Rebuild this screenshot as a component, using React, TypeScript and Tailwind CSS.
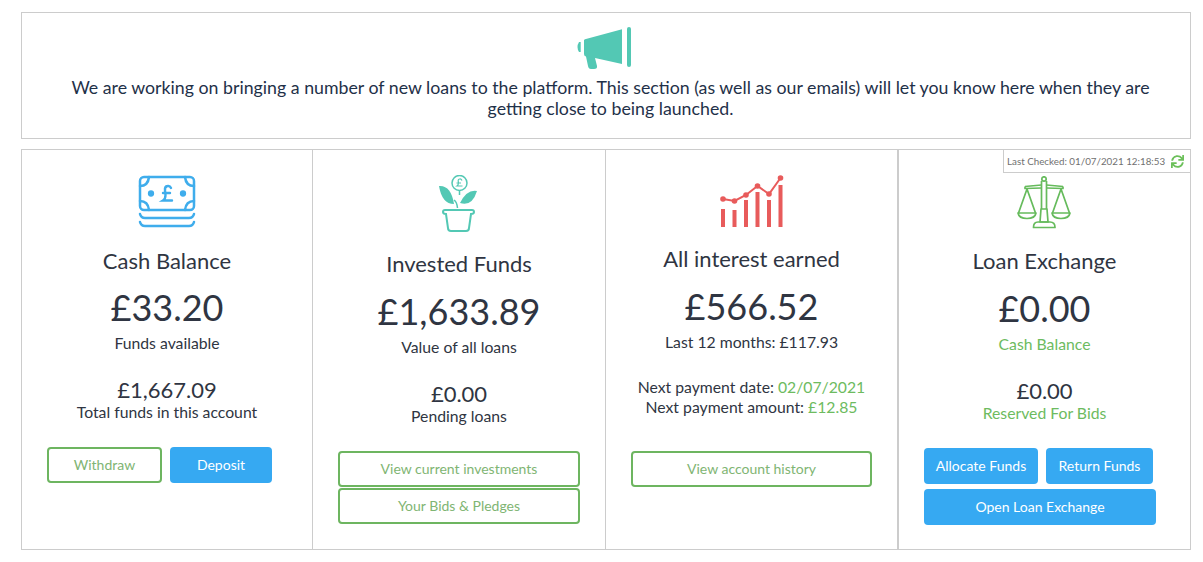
import { FaSync } from 'react-icons/fa'

const outlineBtn = 'h-9 rounded-[4px] border-2 border-[#6db560] bg-white text-sm text-[#7fb573] flex items-center justify-center'
const blueBtn = 'h-9 rounded-[4px] bg-[#36a9f2] text-sm text-white flex items-center justify-center'

function Megaphone() {
  return (
    <svg width="56" height="43" viewBox="0 0 56 43" fill="#53c8b4">
      <path d="M3 15 Q0 20 3 25 L4.700 25 L4.700 15 Z" />
      <path d="M9 12.300 L46 2.300 L46 37 L19 31 L21 39 Q21.500 42 18 42 L15 42 Q12.500 42 12 39 L10 29.500 Q8 29 8 27 L8 13 Z" />
      <rect x="51" y="0" width="4" height="40" rx="2" />
    </svg>
  )
}

function Cash() {
  return (
    <svg width="58" height="54" viewBox="0 0 58 54" fill="none" stroke="#3fadec" strokeWidth="2.500" strokeLinecap="round">
      <rect x="2" y="2" width="54" height="33" rx="4" />
      <path d="M2 11 Q10 11 11 2 M47 2 Q48 11 56 11 M2 26 Q10 26 11 35 M47 35 Q48 26 56 26" />
      <circle cx="13" cy="18.500" r="1.900" fill="#3fadec" />
      <circle cx="45" cy="18.500" r="1.900" fill="#3fadec" />
      <path d="M33 13 Q32 10.500 29.500 11 Q26.500 11.500 27 15.500 L27.500 20 Q27.500 24 25 25.500 L34 25.500 M25 18 L32 18" strokeWidth="2.400" />
      <path d="M2 39 Q3 43 7 43 L51 43 Q55 43 56 39 M2 47 Q3 51 7 51 L51 51 Q55 51 56 47" />
    </svg>
  )
}

function Plant() {
  return (
    <svg width="40" height="58" viewBox="0 0 40 58" fill="none" stroke="#53c8b4" strokeWidth="1.500">
      <circle cx="20.500" cy="8" r="7.500" />
      <path d="M23 5.500 Q22 3.500 20.500 4 Q18.500 4.500 19.500 7.500 Q19.500 10 18 11 L23.500 11 M17.500 8 L22 8" strokeWidth="1.200" />
      <path d="M20.500 15.500 L20.500 20 M18.500 33 Q18 27 15 25" />
      <path d="M0 11 Q12 10 15 29 Q3 29 0 11 Z" fill="#53c8b4" stroke="none" />
      <path d="M38 16 Q28 14 21 28 Q33 32 38 16 Z" fill="#53c8b4" stroke="none" />
      <path d="M6 35 L33 35 Q35 35 35 37 Q35 39 32 39 L30 53 Q30 56 27 56 L12 56 Q9 56 9 53 L7 39 Q4 39 4 37 Q4 35 6 35 Z" strokeWidth="2" />
    </svg>
  )
}

function Chart() {
  return (
    <svg width="64" height="54" viewBox="0 0 64 54" fill="#e85b5b">
      <rect x="1" y="34" width="4" height="18" />
      <rect x="12.500" y="35" width="4" height="17" />
      <rect x="24" y="25" width="4" height="27" />
      <rect x="35.500" y="17" width="4" height="35" />
      <rect x="47" y="25" width="4" height="27" />
      <rect x="58.500" y="10" width="4" height="42" />
      <path d="M3 24 L14.500 26 L26 20 L37.500 11 L49 19 L60.500 3" fill="none" stroke="#e85b5b" strokeWidth="2" />
      <circle cx="3" cy="24" r="2.800" />
      <circle cx="14.500" cy="26" r="2.800" />
      <circle cx="26" cy="20" r="2.800" />
      <circle cx="37.500" cy="11" r="2.800" />
      <circle cx="49" cy="19" r="2.800" />
      <circle cx="60.500" cy="3" r="2.800" />
    </svg>
  )
}

function Scales() {
  return (
    <svg width="56" height="54" viewBox="0 0 56 54" fill="none" stroke="#66bb5c" strokeWidth="1.700" strokeLinejoin="round">
      <circle cx="27" cy="3" r="2.200" />
      <path d="M8 10.500 L24.500 9 M46 10.500 L29.500 9 M8 10.500 L8 12.500 L24.500 12 M46 10.500 L46 12.500 L29.500 12" />
      <path d="M24.500 5 L24.500 33 M29.500 5 L29.500 33" />
      <path d="M24 33 L30 33 L31 46 L23 46 Z" />
      <path d="M16.500 51.500 Q16.500 46 21 46 L33 46 Q38 46 38 51.500 Z" />
      <path d="M10 13 L1.500 37 M10 13 L18.500 37 M44 13 L35.500 37 M44 13 L52.500 37" />
      <path d="M1 37 L19 37 Q18 42.500 10 42.500 Q2 42.500 1 37 Z M35 37 L53 37 Q52 42.500 44 42.500 Q36 42.500 35 37 Z" />
    </svg>
  )
}

export default function App() {
  return (
    <div className="w-[1203px] h-[562px] bg-white pt-3 px-[21px] text-[#2f3542] overflow-hidden" style={{ fontFamily: 'Lato, sans-serif' }}>

      {/* Notice */}
      <div className="w-[1170px] h-[127px] border border-[#cccccc] flex flex-col items-center pt-[14px]">
        <div className="w-[56px] h-[43px] -translate-x-[2px]">
          <Megaphone />
        </div>
        <p className="w-[1100px] ml-[9px] mt-[7px] text-center text-[17.750px] leading-[21px] text-[#1f3149]">
          We are working on bringing a number of new loans to the platform. This section (as well as our emails) will let you know here when they are getting close to being launched.
        </p>
      </div>

      {/* Stats */}
      <div className="relative w-[1170px] h-[401px] mt-[10px] border border-[#cccccc] grid grid-cols-[291px_293px_293px_1fr]">

        <div className="flex flex-col items-center pt-[25px] border-r border-[#cccccc]">
          <Cash />
          <h2 className="mt-[18px] text-[22px] leading-7">Cash Balance</h2>
          <div className="mt-[10px] text-[36px] leading-[44px]">£33.20</div>
          <p className="mt-[4px] text-[15.750px] leading-5">Funds available</p>
          <div className="mt-[23px] text-[22px] leading-7">£1,667.09</div>
          <p className="-mt-[2px] text-[15.750px] leading-5">Total funds in this account</p>
          <div className="mt-[25px] w-full pl-[25px] flex gap-2">
            <button className={`${outlineBtn} w-[115px]`}>Withdraw</button>
            <button className={`${blueBtn} w-[102px]`}>Deposit</button>
          </div>
        </div>

        <div className="flex flex-col items-center pt-[25px] border-r border-[#cccccc]">
          <Plant />
          <h2 className="mt-[17px] text-[22px] leading-7">Invested Funds</h2>
          <div className="mt-[11px] text-[36px] leading-[44px]">£1,633.89</div>
          <p className="mt-[4px] text-[15.750px] leading-5">Value of all loans</p>
          <div className="mt-[23px] text-[22px] leading-7">£0.00</div>
          <p className="-mt-[2px] text-[15.750px] leading-5">Pending loans</p>
          <div className="mt-[25px] w-[242px] flex flex-col gap-px">
            <button className={outlineBtn}>View current investments</button>
            <button className={outlineBtn}>Your Bids &amp; Pledges</button>
          </div>
        </div>

        <div className="flex flex-col items-center pt-[25px] border-r-2 border-[#cccccc]">
          <Chart />
          <h2 className="mt-[16px] text-[22px] leading-7">All interest earned</h2>
          <div className="mt-[11px] text-[36px] leading-[44px]">£566.52</div>
          <p className="mt-[4px] text-[15.750px] leading-5">Last 12 months: £117.93</p>
          <p className="mt-[25px] text-[15.750px] leading-5">Next payment date: <span className="text-[#6dbb60]">02/07/2021</span></p>
          <p className="text-[15.750px] leading-5">Next payment amount: <span className="text-[#6dbb60]">£12.85</span></p>
          <button className={`${outlineBtn} mt-[34px] w-[241px]`}>View account history</button>
        </div>

        <div className="flex flex-col items-center pt-[26px]">
          <Scales />
          <h2 className="mt-[17px] text-[22px] leading-7">Loan Exchange</h2>
          <div className="mt-[11px] text-[36px] leading-[44px]">£0.00</div>
          <p className="mt-[4px] text-[15.750px] leading-5 text-[#6dbb60]">Cash Balance</p>
          <div className="mt-[23px] text-[22px] leading-7">£0.00</div>
          <p className="-mt-[2px] text-[15.750px] leading-5 text-[#6dbb60]">Reserved For Bids</p>
          <div className="mt-[25px] w-full pl-[25px] flex flex-col gap-[5px]">
            <div className="flex gap-2">
              <button className={`${blueBtn} w-[114px]`}>Allocate Funds</button>
              <button className={`${blueBtn} w-[107px]`}>Return Funds</button>
            </div>
            <button className={`${blueBtn} w-[232px]`}>Open Loan Exchange</button>
          </div>
        </div>

        {/* Last checked tab */}
        <div className="absolute top-0 right-0 w-[187px] h-[23px] bg-white border-l border-b border-[#cccccc] flex items-center pl-[3px] gap-[6px] text-[9.800px] text-[#707070]">
          Last Checked: 01/07/2021 12:18:53
          <FaSync className="w-[13px] h-[13px] text-[#6cc05a]" />
        </div>
      </div>
    </div>
  )
}
